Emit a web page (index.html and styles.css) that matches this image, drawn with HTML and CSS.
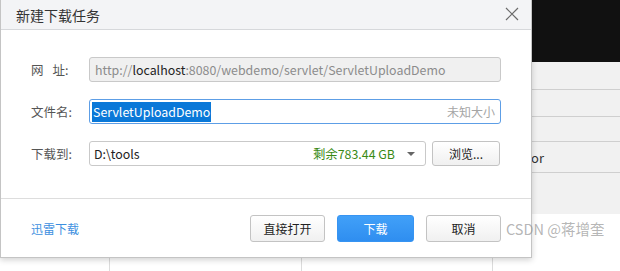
FILE: index.html
```html
<!DOCTYPE html>
<html lang="zh-CN">
<head>
    <meta charset="UTF-8">
    <title>新建下载任务</title>
    <link rel="stylesheet" href="styles.css">
</head>
<body>
    <div class="page">
        <div class="topbar"></div>
        <div class="grid">
            <div class="row"></div>
            <div class="row"></div>
            <div class="row"></div>
            <div class="row"><span class="cell-text">or</span></div>
            <div class="row last"></div>
        </div>
        <div class="cols">
            <div class="col c1"></div>
            <div class="col c2"></div>
            <div class="col c3"></div>
            <div class="col c4"></div>
        </div>
    </div>

    <div class="dialog">
        <div class="dialog-title">
            <span>新建下载任务</span>
            <svg class="close" width="14" height="14" viewBox="0 0 14 14">
                <path d="M1 1 L13 13 M13 1 L1 13" stroke="#6b6b6b" stroke-width="1.2" fill="none"/>
            </svg>
        </div>
        <div class="dialog-body">
            <div class="field">
                <label class="label">网<span class="gap"></span>址:</label>
                <div class="input readonly">http://<b>localhost</b>:8080/webdemo/servlet/ServletUploadDemo</div>
            </div>
            <div class="field">
                <label class="label">文件名:</label>
                <div class="input focus">
                    <span class="selected">ServletUploadDemo</span>
                    <span class="hint">未知大小</span>
                </div>
            </div>
            <div class="field">
                <label class="label">下载到:</label>
                <div class="input select">
                    <span>D:\tools</span>
                    <span class="free">剩余783.44 GB</span>
                    <span class="arrow"></span>
                </div>
                <button class="btn browse">浏览...</button>
            </div>
        </div>
        <div class="dialog-footer">
            <a class="link">迅雷下载</a>
            <div class="actions">
                <button class="btn">直接打开</button>
                <button class="btn primary">下载</button>
                <button class="btn">取消</button>
            </div>
        </div>
    </div>

    <div class="watermark">CSDN @蒋增奎</div>
</body>
</html>
```

FILE: styles.css
```css
body {
    margin: 0;
    padding: 0;
    font-family: "Noto Sans CJK SC", sans-serif;
    font-size: 12px;
    color: #333;
    overflow: hidden;
}

.page {
    position: relative;
    width: 620px;
    height: 271px;
    background-color: #ffffff;
}

.topbar {
    height: 62px;
    background-color: #111111;
}

.grid {
    background-color: #f1f1f1;
    height: 152px;
}

.row {
    height: 26px;
    border-bottom: 1px solid #cfcfcf;
    display: flex;
    align-items: center;
}

.row:nth-child(1) { height: 27px; }
.row:nth-child(3) { height: 24px; }
.row:nth-child(4) { height: 30px; }

.row.last {
    border-bottom: none;
}

.cell-text {
    margin-left: 531px;
    font-size: 13px;
    color: #333;
}

.cols {
    display: flex;
    height: 57px;
}

.col {
    border-right: 1px solid #dcdcdc;
}

.c1 { width: 109px; }
.c2 { width: 191px; }
.c3 { width: 190px; }
.c4 { border-right: none; flex: 1; }

.watermark {
    position: absolute;
    left: 506px;
    top: 218px;
    font-size: 14.5px;
    color: rgba(140, 140, 140, 0.65);
}

.dialog {
    position: absolute;
    left: 0;
    top: 0;
    width: 530px;
    height: 257px;
    background-color: #ffffff;
    border: 1px solid #c4c4c4;
    border-top: none;
    box-shadow: 0 2px 6px rgba(0, 0, 0, 0.18);
    display: flex;
    flex-direction: column;
}

.dialog-title {
    height: 30px;
    background-color: #f3f4f6;
    border-bottom: 1px solid #d6d8db;
    display: flex;
    align-items: center;
    justify-content: space-between;
    padding: 0 12px 0 15px;
    font-size: 14px;
    color: #333;
    box-sizing: border-box;
}

.close {
    margin-top: -2px;
}

.dialog-body {
    padding: 27px 30px 0 30px;
    height: 169px;
    box-sizing: border-box;
    border-bottom: 1px solid #dddddd;
    display: flex;
    flex-direction: column;
    gap: 17px;
}

.field {
    display: flex;
    align-items: center;
}

.label {
    width: 58px;
    color: #555;
    font-size: 12.5px;
}

.gap {
    display: inline-block;
    width: 9px;
}

.input {
    flex: 1;
    height: 25px;
    box-sizing: border-box;
    border: 1px solid #c9c9c9;
    border-radius: 3px;
    padding: 0 4px;
    display: flex;
    align-items: center;
    font-size: 12.4px;
    color: #222;
    white-space: nowrap;
}

.input.readonly {
    background-color: #f0f0f0;
    color: #8c8c8c;
    padding-left: 5px;
}

.input.readonly b {
    font-weight: normal;
    color: #222;
}

.input.focus {
    border-color: #5d9ee6;
    justify-content: space-between;
    padding-left: 2px;
    padding-right: 5px;
}

.selected {
    background-color: #0a78d8;
    color: #ffffff;
    padding: 1px 1px;
}

.hint {
    color: #a5a5a5;
    font-size: 12px;
}

.input.select {
    flex: none;
    width: 337px;
}

.free {
    margin-left: auto;
    color: #3a8a14;
}

.arrow {
    width: 0;
    height: 0;
    margin: 0 6px 0 12px;
    border-left: 4px solid transparent;
    border-right: 4px solid transparent;
    border-top: 4px solid #666;
}

.btn {
    font-family: inherit;
    font-size: 12px;
    color: #222;
    height: 27px;
    width: 75px;
    border: 1px solid #c3c3c3;
    border-radius: 3px;
    background: linear-gradient(#ffffff, #f0f0f0);
    padding: 0;
}

.btn.browse {
    width: 68px;
    height: 25px;
    margin-left: 6px;
}

.btn.primary {
    background: linear-gradient(#41a0f8, #2f8ef0);
    border-color: #3794f2;
    color: #ffffff;
    width: 77px;
}

.dialog-footer {
    flex: 1;
    display: flex;
    align-items: center;
    justify-content: space-between;
    padding: 0 30px 0 30px;
}

.link {
    color: #3d8fe0;
    font-size: 12px;
    margin-top: 1px;
}

.actions {
    display: flex;
    gap: 12px;
}
```
